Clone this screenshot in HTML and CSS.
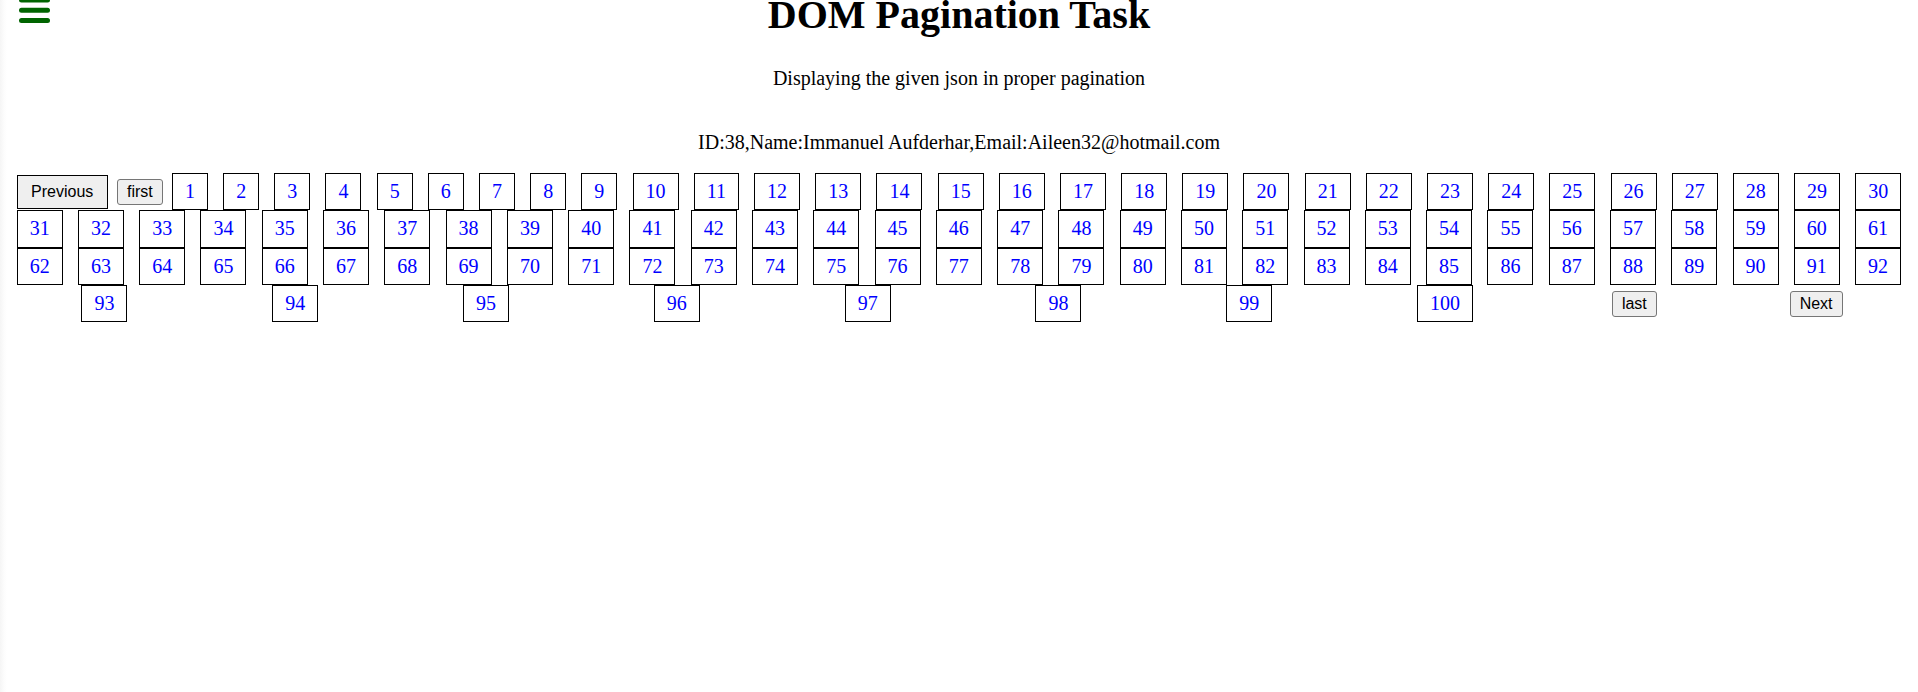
FILE: index.html
```html
<!DOCTYPE html>
<html lang="en">
<head>
<meta charset="utf-8">
<title>DOM Pagination Task</title>
<link rel="stylesheet" href="styles.css">
</head>
<body>
<header class="top">
  <span class="menu" aria-label="menu">
    <svg width="31" height="26" viewBox="0 0 31 26"><g stroke="#006400" stroke-width="5" stroke-linecap="round"><line x1="2.5" y1="0" x2="28.5" y2="0"/><line x1="2.5" y1="10.2" x2="28.5" y2="10.2"/><line x1="2.5" y1="20.5" x2="28.5" y2="20.5"/></g></svg>
  </span>
  <h1 class="title">DOM Pagination Task</h1>
  <span class="spacer"></span>
</header>
<p class="subtitle">Displaying the given json in proper pagination</p>
<p class="record">ID:38,Name:Immanuel Aufderhar,Email:Aileen32@hotmail.com</p>
<div class="pager">
  <button class="prev">Previous</button>
  <button class="nav">first</button>
  <a class="page">1</a><a class="page">2</a><a class="page">3</a><a class="page">4</a><a class="page">5</a><a class="page">6</a><a class="page">7</a><a class="page">8</a><a class="page">9</a><a class="page">10</a>
  <a class="page">11</a><a class="page">12</a><a class="page">13</a><a class="page">14</a><a class="page">15</a><a class="page">16</a><a class="page">17</a><a class="page">18</a><a class="page">19</a><a class="page">20</a>
  <a class="page">21</a><a class="page">22</a><a class="page">23</a><a class="page">24</a><a class="page">25</a><a class="page">26</a><a class="page">27</a><a class="page">28</a><a class="page">29</a><a class="page">30</a>
  <a class="page">31</a><a class="page">32</a><a class="page">33</a><a class="page">34</a><a class="page">35</a><a class="page">36</a><a class="page">37</a><a class="page">38</a><a class="page">39</a><a class="page">40</a>
  <a class="page">41</a><a class="page">42</a><a class="page">43</a><a class="page">44</a><a class="page">45</a><a class="page">46</a><a class="page">47</a><a class="page">48</a><a class="page">49</a><a class="page">50</a>
  <a class="page">51</a><a class="page">52</a><a class="page">53</a><a class="page">54</a><a class="page">55</a><a class="page">56</a><a class="page">57</a><a class="page">58</a><a class="page">59</a><a class="page">60</a>
  <a class="page">61</a><a class="page">62</a><a class="page">63</a><a class="page">64</a><a class="page">65</a><a class="page">66</a><a class="page">67</a><a class="page">68</a><a class="page">69</a><a class="page">70</a>
  <a class="page">71</a><a class="page">72</a><a class="page">73</a><a class="page">74</a><a class="page">75</a><a class="page">76</a><a class="page">77</a><a class="page">78</a><a class="page">79</a><a class="page">80</a>
  <a class="page">81</a><a class="page">82</a><a class="page">83</a><a class="page">84</a><a class="page">85</a><a class="page">86</a><a class="page">87</a><a class="page">88</a><a class="page">89</a><a class="page">90</a>
  <a class="page">91</a><a class="page">92</a><a class="page">93</a><a class="page">94</a><a class="page">95</a><a class="page">96</a><a class="page">97</a><a class="page">98</a><a class="page">99</a><a class="page">100</a>
  <button class="nav">last</button>
  <button class="nav">Next</button>
</div>
</body>
</html>
```

FILE: styles.css
```css
html {
  background: linear-gradient(to right, #f5f5f5 0, #fcfcfc 4px, #ffffff 7px);
}

body {
  margin: 0 8px;
  font-family: "Liberation Serif", "Times New Roman", serif;
  color: #000000;
}

.top {
  display: grid;
  grid-template-columns: 1fr auto 1fr;
  align-items: start;
}

.menu {
  display: flex;
  padding-left: 11px;
}

.menu svg {
  display: block;
  overflow: hidden;
}

.title {
  margin: 0;
  font-size: 40px;
  line-height: 30px;
  font-weight: bold;
  text-align: center;
}

.subtitle {
  margin: 37px 0 0;
  font-size: 20px;
  line-height: 23px;
  text-align: center;
}

.record {
  margin: 41px 0 0;
  font-size: 20px;
  line-height: 23px;
  text-align: center;
}

.pager {
  display: flex;
  flex-wrap: wrap;
  justify-content: space-around;
  align-items: center;
  margin: 19px 1px 0;
}

.page {
  display: block;
  margin: 0 7px;
  padding: 6px 12px;
  border: 1px solid #000000;
  font-size: 20px;
  line-height: 23.3px;
  color: #0000ff;
  background: #ffffff;
  cursor: pointer;
}

.prev {
  margin: 0 7px;
  padding: 7px 13.5px;
  border: 1px solid #000000;
  border-radius: 0;
  background: #efefef;
  font-family: "Liberation Sans", Arial, sans-serif;
  font-size: 16px;
  line-height: 18px;
  color: #000000;
}

.nav {
  margin: 0 1px;
  padding: 3px 9px;
  border: 1px solid #767676;
  border-radius: 3px;
  background: #efefef;
  font-family: "Liberation Sans", Arial, sans-serif;
  font-size: 16px;
  line-height: 18px;
  color: #000000;
}
```
